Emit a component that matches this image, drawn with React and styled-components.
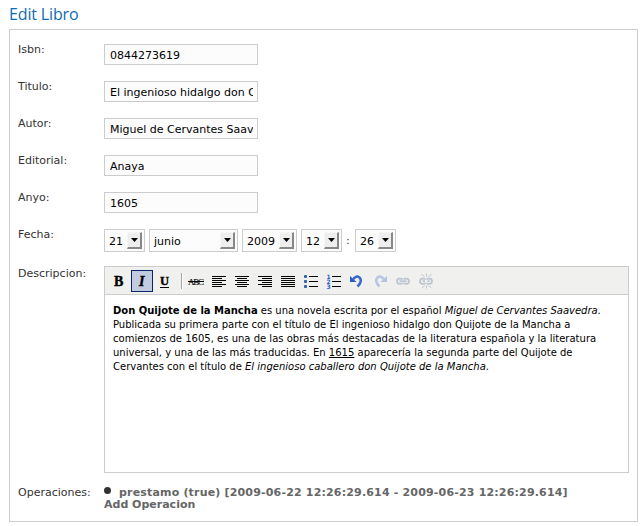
import React from "react";
import styled, { createGlobalStyle, css } from "styled-components";

const Global = createGlobalStyle`
  * { box-sizing: border-box; }
  body { margin: 0; background: #fff; font: 11px/13px Verdana, "DejaVu Sans", sans-serif; color: #333; }
`;
const Page = styled.main`width: 640px; height: 526px; padding: 4px 2px 0 9px; overflow: hidden;`;
const Title = styled.h1`
  margin: 0; height: 25px; color: #0f6cb3; font: 500 16px/21px "Trebuchet MS", "Open Sans", sans-serif;
  letter-spacing: -0.15px; white-space: nowrap;
`;
const Panel = styled.form`
  width: 629px; height: 493px; border: 1px solid #ccc; padding: 14px 8px 0;
`;
const Row = styled.div`
  display: grid; grid-template-columns: 86px 525px; height: ${(p) => p.$h}px;
`;
const Label = styled.label`padding-top: ${(p) => p.$top || 0}px; line-height: 11px; white-space: nowrap;`;
const Input = styled.input`
  width: 154px; height: 21px; padding: 2px 4px 0 5px; border: 1px solid #ccc; border-radius: 0; outline: 0;
  background: #fcfcfc; color: #000; font: inherit;
`;
const Selects = styled.div`display: flex; gap: 4px; align-items: flex-start;`;
const Select = styled.div`
  display: flex; justify-content: space-between; width: ${(p) => p.$w}px; height: 23px;
  border: 1px solid #ccc; background: #fcfcfc; color: #000; padding: 2px 2px 2px 4px; line-height: 19px;
`;
const Drop = styled.span`
  display: flex; justify-content: center; width: 15px; height: 17px; background: #eee;
  border: solid; border-width: 1px 2px 2px 1px; border-color: #f6f6f6 #888 #888 #f6f6f6;
  svg { margin-top: 5px; }
`;
const Colon = styled.span`width: 5px; line-height: 24px;`;
const Editor = styled.section`height: 207px; border: 1px solid #ccc; background: #fff;`;
const Toolbar = styled.div`
  display: flex; align-items: center; gap: 1px; height: 28px; padding-left: 3px;
  background: #f0f0ee; border-bottom: 1px solid #ccc;
`;
const Tool = styled.button`
  display: block; width: 22px; height: 22px; padding: 0; border: 1px solid transparent; background: none;
  ${(p) => p.$active && css`background: #c2cbe0; border-color: #0a246a;`}
  ${(p) => p.$off && css`opacity: 0.3;`}
  svg { display: block; }
`;
const Separator = styled.i`width: 2px; height: 16px; margin: 0 1px 0 4px; background: #a4a4ac; border-right: 1px solid #fff;`;
const Body = styled.div`padding: 9px 8px; color: #000; font-size: 10px; line-height: 14px;`;
const Line = styled.div`white-space: nowrap; letter-spacing: ${(p) => p.$ls || 0}px;`;
const Operations = styled.div`padding-top: 2px; font-weight: 700; color: #666; line-height: 12px; white-space: nowrap;`;
const Item = styled.div`display: flex; align-items: center; gap: 8px; letter-spacing: 0.175px;`;
const Dot = styled.i`width: 7px; height: 7px; border-radius: 50%; background: #333; margin-top: -5px;`;

const Icon = ({ children }) => <svg width="20" height="20" viewBox="0 0 20 20">{children}</svg>;
const Glyph = (p) => (
  <text y="15" fontFamily="Liberation Serif, serif" fontWeight="700" fontSize="14" stroke="#000" strokeWidth="0.4" {...p} />
);
const Lines = ({ rows }) => <Icon>{rows.map(([x, w], i) => <rect key={i} x={x} y={5 + i * 2} width={w} height="1" />)}</Icon>;

const Arrow = () => (
  <Drop><svg width="7" height="4"><path d="M0 0h7L3.500 4z" /></svg></Drop>
);
const Undo = ({ flip }) => (
  <Icon>
    <g transform={flip ? "translate(20 0) scale(-1 1)" : undefined}>
      <path d="M3 5v6h6.500z" fill="#2a5ccc" />
      <path d="M6 8.500C8 5.500 10.500 5 12.200 6.200C15 8.500 14 12.500 10.500 15.500" fill="none" stroke="#3a68cc" strokeWidth="2.500" />
    </g>
  </Icon>
);
const Link = ({ broken }) => (
  <Icon>
    <g fill="none" stroke="#4a6690" strokeWidth="1.8">
      <path d="M9.500 8.500C8.500 7.400 4 6.800 4 10.200s4.500 3 5.500 1.800M10.500 8.500c1-1.100 5.500-1.700 5.500 1.700s-4.500 3-5.500 1.800" />
      {broken ? (
        <>
          <path d="M6.500 10.200H9M11.500 10.200h2" />
          <path d="M10.500 2.500v3M5.500 3l3 3M15.500 3l-3 3M10.500 14.500v3M6 17l2.500-2.500M15 17l-2.500-2.500" strokeWidth="1" />
        </>
      ) : <path d="M6.500 10.200h7" />}
    </g>
  </Icon>
);

const fields = [
  ["Isbn:", "0844273619"],
  ["Titulo:", "El ingenioso hidalgo don Quijote de la Mancha"],
  ["Autor:", "Miguel de Cervantes Saavedra"],
  ["Editorial:", "Anaya"],
  ["Anyo:", "1605"],
];

export default function App() {
  return (
    <Page>
      <Global />
      <Title>Edit Libro</Title>
      <Panel>
        {fields.map(([label, value]) => (
          <Row key={label} $h={37}><Label>{label}</Label><Input defaultValue={value} /></Row>
        ))}
        <Row $h={37}>
          <Label>Fecha:</Label>
          <Selects>
            <Select $w={41}>21<Arrow /></Select>
            <Select $w={89}>junio<Arrow /></Select>
            <Select $w={55}>2009<Arrow /></Select>
            <Select $w={41}>12<Arrow /></Select>
            <Colon>:</Colon>
            <Select $w={41}>26<Arrow /></Select>
          </Selects>
        </Row>
        <Row $h={219}>
          <Label $top={2}>Descripcion:</Label>
          <Editor>
            <Toolbar>
              <Tool type="button"><Icon><Glyph x="5">B</Glyph></Icon></Tool>
              <Tool type="button" $active><Icon><Glyph x="7" fontStyle="italic">I</Glyph></Icon></Tool>
              <Tool type="button"><Icon><Glyph x="5" y="14" fontSize="12.5">U</Glyph><rect x="5" y="16" width="9" height="1" /></Icon></Tool>
              <Separator />
              <Tool type="button"><Icon><Glyph x="2" fontSize="9" y="13.5" fontWeight="400" strokeWidth="0.1" textLength="16" lengthAdjust="spacing">ABC</Glyph><rect x="2" y="10" width="16" height="1" /></Icon></Tool>
              <Tool type="button"><Lines rows={[[3, 14], [3, 10], [3, 14], [3, 10], [3, 14], [3, 10]]} /></Tool>
              <Tool type="button"><Lines rows={[[3, 14], [5, 10], [3, 14], [5, 10], [3, 14], [5, 10]]} /></Tool>
              <Tool type="button"><Lines rows={[[3, 14], [7, 10], [3, 14], [7, 10], [3, 14], [7, 10]]} /></Tool>
              <Tool type="button"><Lines rows={[[3, 14], [3, 14], [3, 14], [3, 14], [3, 14], [3, 14]]} /></Tool>
              <Tool type="button"><Icon>{[5, 10, 15].map((y) => <g key={y}><rect x="3" y={y - 1} width="3" height="3" rx="0.8" fill="#3464ac" /><rect x="8" y={y} width="9" height="1" /></g>)}</Icon></Tool>
              <Tool type="button"><Icon>{[5, 10, 15].map((y, i) => <g key={y}><text x="2.5" y={y + 2.5} fontFamily="DejaVu Sans, sans-serif" fontSize="6" fontWeight="700" fill="#2a5cc0">{i + 1}</text><rect x="8" y={y} width="9" height="1" /></g>)}</Icon></Tool>
              <Tool type="button"><Undo /></Tool>
              <Tool type="button" $off><Undo flip /></Tool>
              <Tool type="button" $off><Link /></Tool>
              <Tool type="button" $off><Link broken /></Tool>
            </Toolbar>
            <Body>
              <Line $ls={-0.01}><b>Don Quijote de la Mancha</b> es una novela escrita por el español <i>Miguel de Cervantes Saavedra</i>.</Line>
              <Line>Publicada su primera parte con el título de El ingenioso hidalgo don Quijote de la Mancha a</Line>
              <Line $ls={0.01}>comienzos de 1605, es una de las obras más destacadas de la literatura española y la literatura</Line>
              <Line $ls={0.01}>universal, y una de las más traducidas. En <u>1615</u> aparecería la segunda parte del Quijote de</Line>
              <Line>Cervantes con el título de <i>El ingenioso caballero don Quijote de la Mancha</i>.</Line>
            </Body>
          </Editor>
        </Row>
        <Row $h={30}>
          <Label $top={2}>Operaciones:</Label>
          <Operations><Item><Dot />prestamo (true) [2009-06-22 12:26:29.614 - 2009-06-23 12:26:29.614]</Item>Add Operacion</Operations>
        </Row>
      </Panel>
    </Page>
  );
}
